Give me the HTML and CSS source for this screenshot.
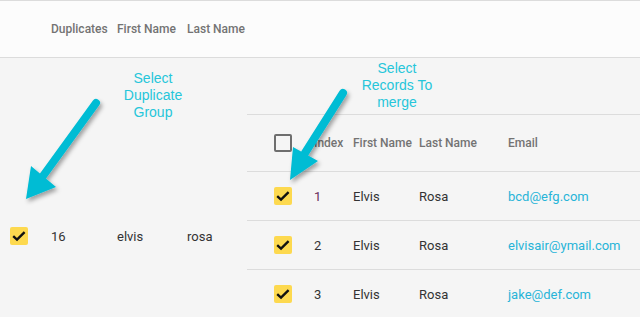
FILE: index.html
```html
<!DOCTYPE html>
<html lang="en">
<head>
  <meta charset="UTF-8" />
  <title>Merge Duplicates</title>
  <link rel="stylesheet" href="styles.css">
</head>
<body>
  <div class="dup-grid">
    <div class="dup-head">
      <span></span>
      <span>Duplicates</span>
      <span>First Name</span>
      <span>Last Name</span>
    </div>

    <div class="dup-row">
      <div class="cell cell-check">
        <span class="checkbox checked">
          <svg viewBox="0 0 18 18"><path d="M3.2 9.2 L7 12.6 L14.6 5.2" /></svg>
        </span>
      </div>
      <div class="cell">16</div>
      <div class="cell">elvis</div>
      <div class="cell">rosa</div>

      <div class="records">
        <div class="rec-head">
          <span class="cell-check"><span class="checkbox"></span></span>
          <span>Index</span>
          <span>First Name</span>
          <span>Last Name</span>
          <span>Email</span>
        </div>
        <div class="rec-row">
          <span class="cell-check"><span class="checkbox checked"><svg viewBox="0 0 18 18"><path d="M3.2 9.2 L7 12.6 L14.6 5.2" /></svg></span></span>
          <span class="rec-index first">1</span>
          <span>Elvis</span>
          <span>Rosa</span>
          <span class="email">bcd@efg.com</span>
        </div>
        <div class="rec-row">
          <span class="cell-check"><span class="checkbox checked"><svg viewBox="0 0 18 18"><path d="M3.2 9.2 L7 12.6 L14.6 5.2" /></svg></span></span>
          <span class="rec-index">2</span>
          <span>Elvis</span>
          <span>Rosa</span>
          <span class="email">elvisair@ymail.com</span>
        </div>
        <div class="rec-row">
          <span class="cell-check"><span class="checkbox checked"><svg viewBox="0 0 18 18"><path d="M3.2 9.2 L7 12.6 L14.6 5.2" /></svg></span></span>
          <span class="rec-index">3</span>
          <span>Elvis</span>
          <span>Rosa</span>
          <span class="email">jake@def.com</span>
        </div>
      </div>
    </div>
  </div>

  <!-- annotations drawn over the grid -->
  <div class="note note-group">Select<br>Duplicate<br>Group</div>
  <div class="note note-records">Select<br>Records To<br>merge</div>

  <svg class="arrows" viewBox="0 0 640 317">
    <defs>
      <filter id="arrowShadow" x="-20%" y="-20%" width="140%" height="140%">
        <feDropShadow dx="2" dy="3" stdDeviation="2" flood-color="#000" flood-opacity="0.35" />
      </filter>
    </defs>
    <g filter="url(#arrowShadow)" fill="#00bcd4" stroke="#00bcd4">
      <line x1="96" y1="103" x2="43" y2="176" stroke-width="8" stroke-linecap="round" />
      <polygon points="31,166 56,187 26,199" stroke="none" />
      <line x1="343" y1="93" x2="305" y2="153" stroke-width="8" stroke-linecap="round" />
      <polygon points="293,147 318,161 290,180" stroke="none" />
    </g>
  </svg>
</body>
</html>
```

FILE: styles.css
```css
* {
  box-sizing: border-box;
}

html,
body {
  margin: 0;
  height: 317px;
  overflow: hidden;
}

body {
  background: #f5f5f5;
  font-family: Roboto, "Liberation Sans", sans-serif;
  position: relative;
}

.dup-grid {
  height: 317px;
  overflow: hidden;
}

.dup-head {
  display: grid;
  grid-template-columns: 51px 66px 70px 60px 1fr;
  align-items: center;
  height: 58px;
  background: #fcfcfc;
  border-top: 1px solid #dcdcdc;
  border-bottom: 1px solid #dcdcdc;
  font-size: 12px;
  font-weight: 500;
  color: #737373;
}

.dup-row {
  display: grid;
  grid-template-columns: 51px 66px 70px 60px 1fr;
  align-items: center;
  min-height: 356px;
  font-size: 13px;
  color: #333;
}

.cell-check {
  padding-left: 10px;
  display: flex;
  align-items: center;
}

.checkbox {
  display: inline-block;
  width: 18px;
  height: 18px;
  border: 2px solid #6e6e6e;
  border-radius: 2px;
}

.checkbox.checked {
  border: none;
  background: #fdd94f;
}

.checkbox svg {
  display: block;
  width: 18px;
  height: 18px;
}

.checkbox svg path {
  fill: none;
  stroke: #111;
  stroke-width: 2.4;
}

.records {
  align-self: start;
  margin-top: 56px;
  border-top: 1px solid #dcdcdc;
}

.rec-head,
.rec-row {
  display: grid;
  grid-template-columns: 67px 39px 66px 89px 1fr;
  align-items: center;
  border-bottom: 1px solid #dcdcdc;
}

.rec-head {
  height: 57px;
  font-size: 12px;
  font-weight: 500;
  color: #737373;
}

.rec-row {
  height: 49px;
  font-size: 13px;
  color: #333;
}

.rec-head .cell-check,
.rec-row .cell-check {
  padding-left: 27px;
}

.rec-index.first {
  color: #6a2d5c;
}

.email {
  color: #27b4d8;
}

/* annotation overlay */
.note {
  position: absolute;
  font-family: "Liberation Sans", Arial, sans-serif;
  font-size: 14px;
  line-height: 17px;
  color: #26c6da;
  text-align: center;
}

.note-group {
  left: 108px;
  top: 70px;
  width: 90px;
}

.note-records {
  left: 347px;
  top: 60px;
  width: 100px;
}

.arrows {
  position: absolute;
  left: 0;
  top: 0;
  width: 640px;
  height: 317px;
  pointer-events: none;
}
```
